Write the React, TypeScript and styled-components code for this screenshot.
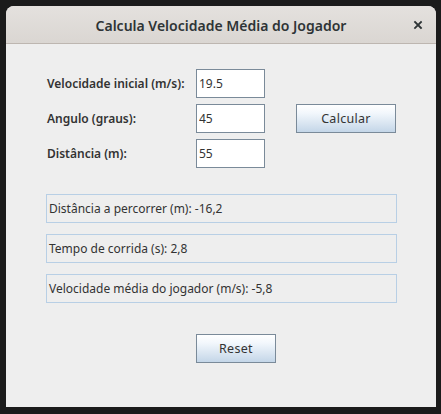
import * as React from 'react';
import styled, { createGlobalStyle } from 'styled-components';

const GlobalStyle = createGlobalStyle`
	html, body {
		margin: 0;
		padding: 0;
		background: #1b1b1b;
	}
	body {
		width: 441px;
		height: 414px;
		overflow: hidden;
	}
`;

const results = [
	'Distância a percorrer (m): -16,2',
	'Tempo de corrida (s): 2,8',
	'Velocidade média do jogador (m/s): -5,8',
];

const fields = [
	{ label: 'Velocidade inicial (m/s):', value: '19.5' },
	{ label: 'Angulo (graus):', value: '45' },
	{ label: 'Distância (m):', value: '55' },
];

export default function App() {
	return (
		<>
			<GlobalStyle />
			<Screen>
				<Window>
					<TitleBar>
						<Title>Calcula Velocidade Média do Jogador</Title>
						<CloseButton aria-label="Fechar">
							<svg width="10" height="10" viewBox="0 0 10 10">
								<path d="M2 2 L8 8 M8 2 L2 8" stroke="#2e3436" strokeWidth="1.8" strokeLinecap="square" />
							</svg>
						</CloseButton>
					</TitleBar>
					<Content>
						<FormRow>
							<FieldGrid>
								{fields.map(f => (
									<React.Fragment key={f.label}>
										<Label>{f.label}</Label>
										<TextField defaultValue={f.value} />
									</React.Fragment>
								))}
							</FieldGrid>
							<ButtonCol>
								<SwingButton $width={100}>Calcular</SwingButton>
							</ButtonCol>
						</FormRow>
						<ResultList>
							{results.map(r => (
								<ResultBox key={r}>{r}</ResultBox>
							))}
						</ResultList>
						<Footer>
							<SwingButton $width={80}>Reset</SwingButton>
						</Footer>
					</Content>
				</Window>
			</Screen>
		</>
	);
}

const Screen = styled.div`
	width: 441px;
	height: 414px;
	padding: 6px 5px 7px 6px;
	box-sizing: border-box;
`;

const Window = styled.div`
	width: 430px;
	height: 401px;
	display: flex;
	flex-direction: column;
	background: #eeeeee;
	border-radius: 8px 8px 0 0;
	overflow: hidden;
`;

const TitleBar = styled.div`
	height: 37px;
	flex-shrink: 0;
	display: flex;
	align-items: center;
	justify-content: center;
	position: relative;
	background: linear-gradient(#e4e1de, #dad6d2);
	border-bottom: 1px solid #bdb6b0;
`;

const Title = styled.div`
	font-family: 'Noto Sans', 'Open Sans', sans-serif;
	font-weight: 600;
	font-size: 14px;
	color: #2e3436;
	padding-top: 1px;
`;

const CloseButton = styled.div`
	position: absolute;
	right: 13px;
	top: 14px;
	width: 10px;
	height: 10px;
	display: flex;
`;

const Content = styled.div`
	flex: 1;
	display: flex;
	flex-direction: column;
	padding: 25px 39px 0 40px;
	font-family: 'Noto Sans', 'Open Sans', sans-serif;
	color: #333333;
`;

const FormRow = styled.div`
	display: flex;
	align-items: center;
`;

const FieldGrid = styled.div`
	display: grid;
	grid-template-columns: 150px 69px;
	grid-auto-rows: 29px;
	row-gap: 6px;
	align-items: center;
`;

const Label = styled.div`
	font-size: 12px;
	font-weight: 600;
	color: #333333;
	padding-left: 1px;
`;

const TextField = styled.input`
	width: 69px;
	height: 29px;
	box-sizing: border-box;
	border: 1px solid #7a8a99;
	background: #ffffff;
	padding: 0 0 0 2px;
	margin: 0;
	font-family: 'Noto Sans', 'Open Sans', sans-serif;
	font-size: 12px;
	color: #333333;
	outline: none;
`;

const ButtonCol = styled.div`
	margin-left: 31px;
	display: flex;
`;

const SwingButton = styled.button<{ $width: number }>`
	width: ${p => p.$width}px;
	height: 29px;
	box-sizing: border-box;
	border: 1px solid #7a8a99;
	border-radius: 0;
	background: linear-gradient(#ffffff 0%, #f2f7fc 30%, #c4d6e8 100%);
	font-family: 'Noto Sans', 'Open Sans', sans-serif;
	font-size: 12.5px;
	letter-spacing: 0.3px;
	color: #333333;
	padding: 0;
	margin: 0;
`;

const ResultList = styled.div`
	margin-top: 26px;
	display: flex;
	flex-direction: column;
	gap: 11px;
`;

const ResultBox = styled.div`
	height: 29px;
	box-sizing: border-box;
	border: 1px solid #b8cfe5;
	display: flex;
	align-items: center;
	padding-left: 2px;
	font-size: 12px;
	color: #333333;
`;

const Footer = styled.div`
	margin-top: 31px;
	display: flex;
	justify-content: flex-start;
	padding-left: 150px;
`;
